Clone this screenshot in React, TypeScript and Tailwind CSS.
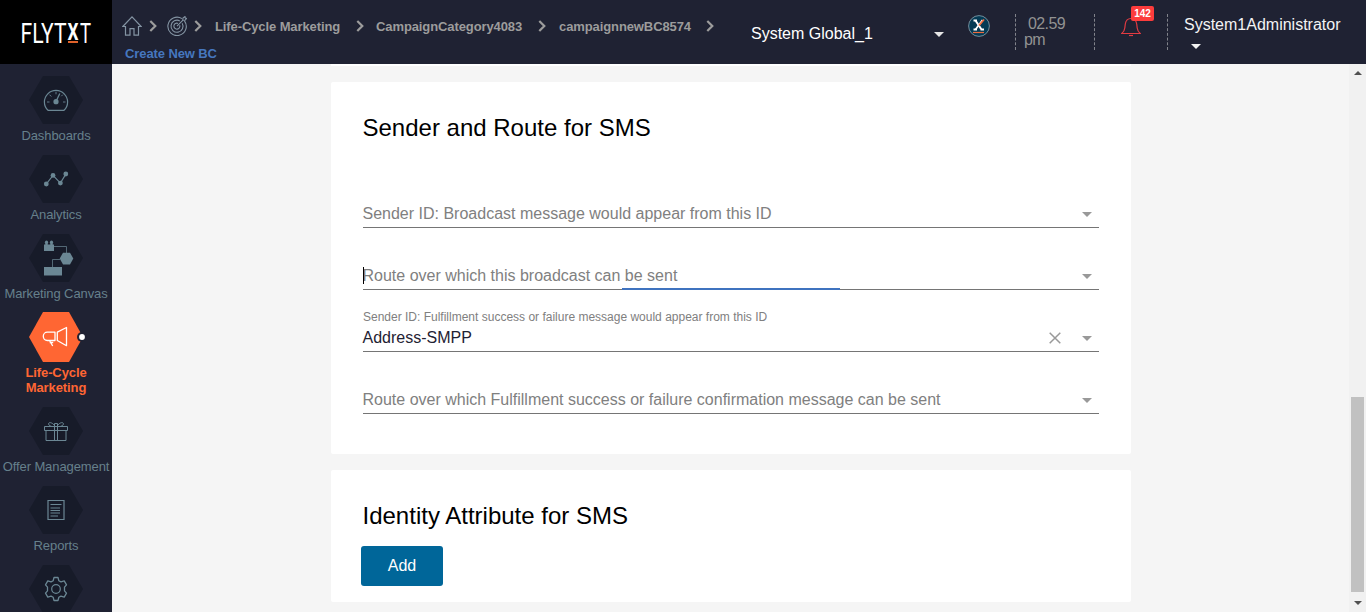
import type { ReactNode } from "react";

function Caret({ className }: { className: string }) {
  return (
    <svg viewBox="0 0 10 5" className={`block h-[5px] w-[10px] shrink-0 ${className}`}>
      <path d="M0 0h10L5 5z" fill="currentColor" />
    </svg>
  );
}

function Chevron({ className = "" }: { className?: string }) {
  return (
    <svg viewBox="0 0 8 12" className={`block h-3 w-2 shrink-0 text-[#9c9c9c] ${className}`}>
      <path d="M1.3 1l5 5-5 5" fill="none" stroke="currentColor" strokeWidth="2.2" />
    </svg>
  );
}

function Logo() {
  return (
    <svg viewBox="0 0 112 64" className="block h-16 w-28 shrink-0 bg-black" fill="#fff" fontFamily="Roboto, sans-serif" fontSize="28">
      <text x="20.500" y="42.500" textLength="46" lengthAdjust="spacingAndGlyphs">FLYT</text>
      <text x="67.500" y="39.500" fontSize="24" fontWeight="700" textLength="11" lengthAdjust="spacingAndGlyphs">X</text>
      <text x="80" y="42.500" textLength="11" lengthAdjust="spacingAndGlyphs">T</text>
      <path d="M68 41h10v2H68z" fill="#e0622a" />
    </svg>
  );
}

const svgProps = {
  viewBox: "0 0 54 48",
  className: "block h-12 w-[54px] shrink-0 overflow-visible",
  fill: "none",
  stroke: "#6b8794",
};

function Hex() {
  return <path d="M14 0h26l14 24-14 24H14L0 24z" fill="#171b29" stroke="none" />;
}

function NavItem({ label, children }: { label?: string; children: ReactNode }) {
  return (
    <div className="flex flex-col items-center gap-1 text-[#66808c]">
      <svg {...svgProps}>
        <Hex />
        {children}
      </svg>
      {label && <span className="whitespace-nowrap text-[13px] leading-[15px] tracking-[-0.1px]">{label}</span>}
    </div>
  );
}

function Sidebar() {
  return (
    <aside className="flex h-[612px] w-28 shrink-0 flex-col overflow-hidden bg-[#1f2233]">
      <Logo />
      <nav className="flex flex-col gap-3 pt-3">
        <NavItem label="Dashboards">
          <path d="M19 34.3c-2.2-2-3.6-5-3.6-8.3a11.6 11.6 0 0 1 23.2 0c0 3.300-1.400 6.300-3.600 8.300z" strokeWidth="1.200" />
          <path d="M18 26h2.500M34 26h2.500M20.500 18.700l1.800 1.800M27 15.700v2.600M33.800 18.700l-1.500 1.500" strokeWidth=".9" />
          <path d="M27 25.500l3.800-8" strokeWidth="1.300" />
          <circle cx="27" cy="25.700" r="2.600" fill="#6b8794" stroke="none" />
        </NavItem>
        <NavItem label="Analytics">
          <path d="M17.300 29l6.700-8.600 7.400 7.700 5.400-9" strokeWidth="1.200" />
          <g fill="#6b8794" stroke="none">
            <circle cx="17.300" cy="29" r="2.400" />
            <circle cx="24" cy="20.400" r="2.400" />
            <circle cx="31.400" cy="28.100" r="2.400" />
            <circle cx="36.800" cy="19" r="2.400" />
          </g>
        </NavItem>
        <NavItem label="Marketing Canvas">
          <path d="M25 12.500h12.500V19M31 25.500h-7.500V33" strokeWidth=".9" strokeOpacity=".8" />
          <g fill="#6b8794" stroke="none">
            <path d="M15 10.500h10V17H15z" />
            <path d="M16.300 8.500h2.400V11h-2.400zM21.300 8.500h2.400V11h-2.400z" />
            <circle cx="17.500" cy="8.200" r="1.600" />
            <circle cx="22.500" cy="8.200" r="1.600" />
            <path d="M34 18.700h7l3.300 5.800-3.300 6h-7l-3.300-6z" />
            <path d="M15 33h18v8.500H15z" />
          </g>
        </NavItem>
        <div className="flex flex-col items-center gap-1">
          <svg {...svgProps}>
            <path d="M14-1h26l14 25-14 25H14L0 24z" fill="#ff6633" stroke="none" />
            <circle cx="53" cy="24" r="5" fill="#1f2233" stroke="none" />
            <circle cx="53" cy="24" r="2.900" fill="#fff" stroke="none" />
            <g stroke="#fff" strokeWidth="1.300" strokeLinejoin="round">
              <path d="M26 19.200h-7.700c-2.300 0-4 1.900-4 4.100s1.700 4.200 4 4.200H26zM28.300 19.200l9.200-4.700v18.200l-9.200-5.200z" />
              <path d="M20.700 27.700l3 5.300M20.700 29.500h3.500" />
            </g>
          </svg>
          <span className="text-center text-[13px] font-bold leading-[15px] tracking-[-0.1px] text-[#ff6633]">
            Life-Cycle
            <br />
            Marketing
          </span>
        </div>
        <NavItem label="Offer Management">
          <g strokeWidth="1">
            <path d="M15.500 19.500h23v4h-23zM17 23.500h20v10H17zM25.500 19.500v14M28.500 19.500v14" />
            <path d="M26 19.300c-2-3.500-5.500-4.500-6.300-3-.6 1.200.8 2.600 2.800 3M28 19.300c2-3.500 5.500-4.500 6.300-3 .6 1.200-.8 2.600-2.800 3M25.500 16.500h3v3h-3z" />
          </g>
        </NavItem>
        <NavItem label="Reports">
          <path d="M19 14.500h16v19H19z" strokeWidth="1.200" />
          <path d="M21.500 18.500h11M21.500 22h9.500M21.500 24.500h9.500M21.500 27h9.500M21.500 30h7.500" strokeWidth="1" />
        </NavItem>
        <NavItem>
          <circle cx="27" cy="24" r="4.300" strokeWidth="1.200" />
          <path
            d="M25 12.500h4l.8 3.200 2.200 1.200 3.200-1 2.300 3.900-2 2.400v3.600l2 2.400-2.300 3.900-3.200-1-2.200 1.200-.8 3.200h-4l-.8-3.200-2.200-1.200-3.200 1-2.300-3.900 2-2.400v-3.600l-2-2.400 2.300-3.900 3.200 1 2.200-1.200z"
            strokeWidth="1.300"
            strokeLinejoin="round"
          />
        </NavItem>
      </nav>
    </aside>
  );
}

function Header() {
  return (
    <header className="flex h-16 shrink-0 bg-[#1f2233]">
      <div className="flex w-[639px] flex-col pl-[10px] pt-[14px]">
        <div className="flex h-6 items-center text-[13px] font-bold tracking-[-0.1px] text-[#9c9c9c]">
          <svg viewBox="0 0 20 20" className="block size-5" fill="none" stroke="#8494a3" strokeWidth="1.200">
            <path d="M.8 10.500L10 .9l9.200 9.600H16.500v8.700H12v-6.500H8v6.500H3.500v-8.700z" />
          </svg>
          <Chevron className="ml-[7px]" />
          <svg viewBox="0 0 20 20" className="ml-[10px] block size-5" fill="none" stroke="#8494a3" strokeWidth="1.100">
            <path d="M15 2.600a9.200 9.200 0 1 0 2.400 2.200" />
            <path d="M12.800 4.900a6 6 0 1 0 2.400 2.300" />
            <path d="M11 7.400a3 3 0 1 0 1.700 1.800" />
            <path d="M10 10.200l6-6M15.700 4.300l.3-2.300 2-1.500.3 1.500 1.300.4-1.500 1.900z" />
          </svg>
          <Chevron className="ml-[7px]" />
          <span className="ml-[13px] w-[141px] whitespace-nowrap pt-[2px]">Life-Cycle Marketing</span>
          <Chevron />
          <span className="ml-[12px] w-[162px] whitespace-nowrap pt-[2px]">CampaignCategory4083</span>
          <Chevron />
          <span className="ml-[13px] w-[147px] whitespace-nowrap pt-[2px]">campaignnewBC8574</span>
          <Chevron />
        </div>
        <div className="mt-2 pl-[3px] text-[13px] font-bold leading-4 tracking-[-0.1px] text-[#4677bf]">Create New BC</div>
      </div>
      <div className="flex h-[66px] w-[193px] items-center justify-between text-base text-white">
        <span className="pt-[2px]">System Global_1</span>
        <Caret className="mt-[3px] text-[#e6e6e6]" />
      </div>
      <svg viewBox="0 0 22 22" className="ml-6 mt-[15px] block size-[22px]">
        <circle cx="11" cy="11" r="10.400" fill="#043a54" stroke="#7d97a5" strokeWidth=".9" />
        <path d="M7.500 5.500l6 9M5.500 14.500h3.500M12.500 14.500H16M5.500 5.500H9" stroke="#fff" strokeWidth="2" />
        <path d="M14.500 5L7.500 14.500" stroke="#fff" strokeWidth="1.700" />
        <path d="M16 4.500L11 10.500" stroke="#ef6b3c" strokeWidth="1.800" />
        <path d="M5 17.500h11" stroke="#ef6b3c" strokeWidth="1.200" />
      </svg>
      <div className="ml-[25px] mt-[14px] h-9 w-20 border-l border-dashed border-[#81838b] pl-2 pt-[2px] text-base leading-4 tracking-[-0.6px] text-[#929292]">
        <span className="pl-1">02.59</span>
        <br />
        <span>pm</span>
      </div>
      <div className="relative -ml-px mt-[14px] h-9 w-[73px] border-l border-dashed border-[#81838b]">
        <svg viewBox="0 0 20 20" className="ml-[26px] mt-[3px] block size-5" fill="none" stroke="#e23b42" strokeWidth="1.200">
          <path d="M.8 16.500c2-1.500 2.700-3 3-5.500l.5-4C4.800 3.500 7 1.500 10 1.500S15.200 3.500 15.700 7l.5 4c.3 2.500 1 4 3 5.500z" />
          <path d="M8 18.500h4" />
        </svg>
        <span className="absolute -top-2 left-9 flex h-[15px] w-[23px] items-center justify-center rounded-[2px] bg-[#fc3c3c] text-[10px] font-bold text-white">
          142
        </span>
      </div>
      <div className="mt-[14px] h-9 w-[190px] border-l border-dashed border-[#81838b] pl-4 pt-px text-base leading-5 text-[#f3f3f3]">
        System1Administrator
        <Caret className="ml-[7px] mt-[9px]" />
      </div>
    </header>
  );
}

type FieldProps = { label: string; value?: string; focused?: boolean };

function Field({ label, value, focused }: FieldProps) {
  return (
    <div className="relative flex h-[62px] flex-col justify-end border-b border-[#757575] pb-[2px]">
      {value && <span className="mb-[3px] text-[12px] leading-[14px] text-[#808080]">{label}</span>}
      <div className="flex h-[22px] items-center pr-[7px]">
        <span className={value ? "-ml-[0.5px] grow text-base text-[#1f2233]" : "-ml-[0.5px] grow text-base text-[#808080]"}>
          {value ?? label}
        </span>
        {value && (
          <svg viewBox="0 0 12 12" className="mr-[21px] block size-3 text-[#999]">
            <path d="M.7.7l10.600 10.600M11.300.7L.7 11.300" fill="none" stroke="currentColor" strokeWidth="1.500" />
          </svg>
        )}
        <Caret className="mt-px text-[#999]" />
      </div>
      {focused && (
        <>
          <span className="absolute bottom-[5px] left-0 h-[17px] w-px bg-black" />
          <span className="absolute -bottom-px left-[259px] h-[2px] w-[218px] bg-[#3f73bf]" />
        </>
      )}
    </div>
  );
}

function Scrollbar() {
  return (
    <div className="flex w-[17px] shrink-0 flex-col items-center bg-[#f1f1f1] text-[#505050]">
      <svg viewBox="0 0 8 4" className="mt-[7px] block h-1 w-2">
        <path d="M0 4h8L4 0z" fill="currentColor" />
      </svg>
      <div className="mt-[322px] h-[195px] w-[13px] bg-[#c1c1c1]" />
      <svg viewBox="0 0 8 4" className="mt-[9px] block h-1 w-2">
        <path d="M0 0h8L4 4z" fill="currentColor" />
      </svg>
    </div>
  );
}

export default function App() {
  return (
    <div className="flex h-[612px] w-[1366px] overflow-hidden font-['Liberation_Sans',Arial,sans-serif]">
      <Sidebar />
      <div className="flex min-w-0 grow flex-col">
        <Header />
        <div className="flex min-h-0 grow">
          <main className="flex grow flex-col items-start gap-4 overflow-hidden bg-[#f5f5f5] pl-[219px]">
            <div className="h-[2px] w-[800px] shrink-0 bg-white" />
            <section className="h-[372px] w-[800px] shrink-0 rounded-[2px] bg-white px-8 pt-8">
              <h2 className="-ml-[0.5px] text-2xl leading-7 text-black">Sender and Route for SMS</h2>
              <div className="pt-[24px]">
                <Field label="Sender ID: Broadcast message would appear from this ID" />
                <Field label="Route over which this broadcast can be sent" focused />
                <Field label="Sender ID: Fulfillment success or failure message would appear from this ID" value="Address-SMPP" />
                <Field label="Route over which Fulfillment success or failure confirmation message can be sent" />
              </div>
            </section>
            <section className="h-[132px] w-[800px] shrink-0 rounded-[2px] bg-white px-[30px] pt-8">
              <h2 className="pl-[1.5px] text-2xl leading-7 text-black">Identity Attribute for SMS</h2>
              <button className="mt-4 h-10 w-[82px] rounded-[3px] bg-[#006699] text-base text-white">Add</button>
            </section>
          </main>
          <Scrollbar />
        </div>
      </div>
    </div>
  );
}
